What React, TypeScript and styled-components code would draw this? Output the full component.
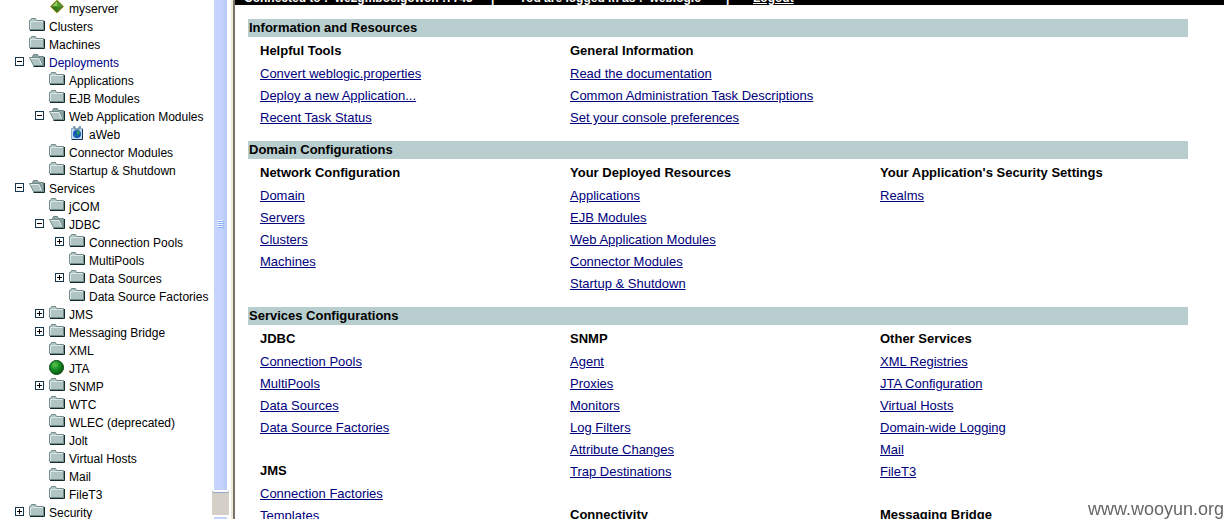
import React from 'react';
import styled, { createGlobalStyle } from 'styled-components';

const GlobalStyle = createGlobalStyle`
  * { box-sizing: border-box; }
  body {
    margin: 0;
    background: #fff;
    color: #000;
    font-family: "Liberation Sans", Arial, sans-serif;
    font-size: 13px;
    overflow: hidden;
  }
`;

const Page = styled.div`
  display: flex;
  height: 100vh;
  overflow: hidden;
`;

const Sidebar = styled.nav`
  flex: 0 0 212px;
  overflow: hidden;
`;

const Tree = styled.ul`
  list-style: none;
  margin: 0;
  padding: 0;
`;

const TreeRow = styled.li<{ $level: number }>`
  display: flex;
  align-items: center;
  height: 18px;
  padding-left: ${(p) => 14 + p.$level * 20}px;
  font-size: 12px;
  line-height: 18px;
  white-space: nowrap;
`;

const Toggle = styled.button`
  display: flex;
  width: 15px;
  height: 18px;
  padding: 3px 0 0 1px;
  border: 0;
  background: none;
  svg { flex: none; }
`;

const ToggleSpace = styled.span`
  width: 15px;
`;

const IconSlot = styled.span`
  display: flex;
  flex: 0 0 20px;
  height: 18px;
`;

const TreeLink = styled.a<{ $active?: boolean }>`
  color: ${(p) => (p.$active ? '#00008b' : '#000')};
  text-decoration: none;
`;

const Scrollbar = styled.div`
  display: flex;
  flex-direction: column;
  flex: 0 0 17px;
  background: #d4d0c8;
`;

const Thumb = styled.div`
  display: flex;
  align-items: center;
  justify-content: center;
  height: 492px;
  padding-bottom: 42px;
  border: solid #fff;
  border-width: 0 2px 2px;
  border-radius: 0 0 3px 3px;
  background: linear-gradient(90deg, #c6d5fd, #c3d3fd 60%, #b4c8f6);
  box-shadow: 0 1px 0 #8fa5d4;
`;

const ScrollArrow = styled.div`
  height: 10px;
  margin-top: auto;
  border: 2px solid #fff;
  border-bottom: 0;
  background: #c3d3fd;
  margin-bottom: -6px;
`;

const Divider = styled.div`
  flex: 0 0 6px;
  border-left: 2px solid #fff;
  border-right: 2px solid #77756b;
  background: #ece9d8;
`;

const Main = styled.main`
  flex: 1;
  min-width: 0;
  overflow: hidden;
`;

const StatusBar = styled.header`
  display: flex;
  align-items: flex-end;
  height: 5px;
  padding-left: 9px;
  overflow: hidden;
  background: #000;
  color: #fff;
  font-size: 12px;
  font-weight: bold;
  line-height: 14px;
  white-space: pre;
`;

const StatusText = styled.span<{ $width: number }>`
  flex: 0 0 ${(p) => p.$width}px;
`;

const Logout = styled.a`
  color: #fff;
`;

const Sections = styled.div`
  padding: 14px 36px 0 13px;
`;

const Section = styled.section`
  padding-bottom: 12px;
`;

const SectionTitle = styled.h2`
  margin: 0;
  padding-left: 1px;
  background: #b8cdcd;
  font-size: 13px;
  line-height: 18px;
`;

const Columns = styled.div`
  display: grid;
  grid-template-columns: 310px 310px 1fr;
  padding: 2px 0 0 12px;
`;

const Group = styled.div`
  & + & { margin-top: 20px; }
`;

const GroupTitle = styled.h3`
  margin: 0;
  font-size: 13px;
  line-height: 24px;
`;

const Links = styled.ul`
  list-style: none;
  margin: 0;
  padding: 0;
`;

const LinkItem = styled.li`
  line-height: 22px;
  white-space: nowrap;
  a { color: #00007c; }
`;

const Watermark = styled.div`
  position: fixed;
  right: 0;
  bottom: 0;
  color: #666;
  font-size: 18px;
  line-height: 20px;
`;

type IconKind = 'folder' | 'open' | 'server' | 'web' | 'ball';

function TreeIcon({ kind }: { kind: IconKind }) {
  if (kind === 'server') {
    return (
      <svg width="16" height="18" viewBox="0 0 16 18">
        <path d="M8-1 15.500 6.500 8 14 .5 6.500Z" fill="#fff0a0" />
        <path d="M8 .5 14 6.500 8 12.500 2 6.500Z" fill="#3d8a22" stroke="#4d4a14" />
        <path d="M8 1 3 6.500H8Z" fill="#8ed056" />
        <path d="M8 1 13 6.500H8Z" fill="#57a436" />
        <path d="M3 6.500 8 12V6.500Z" fill="#2f791c" />
      </svg>
    );
  }
  if (kind === 'ball') {
    return (
      <svg width="16" height="18" viewBox="0 0 16 18">
        <defs>
          <radialGradient id="ball" cx="38%" cy="32%" r="65%">
            <stop offset="0" stopColor="#62c552" />
            <stop offset=".5" stopColor="#189326" />
            <stop offset="1" stopColor="#075c12" />
          </radialGradient>
        </defs>
        <circle cx="7.500" cy="7.500" r="7" fill="url(#ball)" stroke="#0a4a12" />
      </svg>
    );
  }
  if (kind === 'web') {
    return (
      <svg width="16" height="18" viewBox="0 0 16 18">
        <path d="M2.500 2.500H4L6 4H10L12 2.500H13.500V13.500H2.500Z" fill="#c3dcf6" stroke="#8fabc4" />
        <path d="M13.500 3V13.500H3" fill="none" stroke="#16354e" />
        <path d="M4 0H6L7 2H9L10 0H12V2L10 4H6L4 2Z" fill="#7f9db0" />
        <circle cx="8" cy="8" r="4" fill="#1455bd" />
        <path d="M8 4.500 10 4.500 11.500 7 10 8 9 10 7.500 7ZM5 8 7 9 7 11Z" fill="#2c9865" />
      </svg>
    );
  }
  if (kind === 'open') {
    return (
      <svg width="16" height="18" viewBox="0 0 16 18">
        <path d="M3.500 2.500 4.500.5H8.500L9.500 2.500H14.500V11.500H5Z" fill="#8ea6a6" stroke="#6d8686" />
        <path d="M15.500 3V12.500H4.500" fill="none" stroke="#142b2b" />
        <path d="M.5 3.500H10.500L14 11.500H4.500Z" fill="#b0c4c4" stroke="#718b8b" />
        <path d="M1.500 4.500H10L12.500 10.500" fill="none" stroke="#e2ecec" />
      </svg>
    );
  }
  return (
    <svg width="16" height="18" viewBox="0 0 16 18">
      <path d="M.5 11.500V2.500H1.500L2.500.5H6.500L7.500 2.500H14.500V11.500Z" fill="#b0c4c4" stroke="#718b8b" />
      <path d="M1.500 11V3.500H14" fill="none" stroke="#dce8e8" />
      <path d="M15.500 3V12.500H1" fill="none" stroke="#142b2b" />
    </svg>
  );
}

function ToggleBox({ open }: { open: boolean }) {
  return (
    <svg width="10" height="10" viewBox="0 0 10 10">
      <rect x=".5" y=".5" width="8" height="8" fill="#fff" stroke="#17364c" />
      <path d={open ? 'M2 4.500H7' : 'M2 4.500H7M4.500 2V7'} stroke="#000" />
    </svg>
  );
}

interface Node {
  label: string;
  level: number;
  icon?: IconKind;
  toggle?: 'open' | 'closed';
  active?: boolean;
}

const nodes: Node[] = [
  { label: 'myserver', level: 1, icon: 'server' },
  { label: 'Clusters', level: 0 },
  { label: 'Machines', level: 0 },
  { label: 'Deployments', level: 0, icon: 'open', toggle: 'open', active: true },
  { label: 'Applications', level: 1 },
  { label: 'EJB Modules', level: 1 },
  { label: 'Web Application Modules', level: 1, icon: 'open', toggle: 'open' },
  { label: 'aWeb', level: 2, icon: 'web' },
  { label: 'Connector Modules', level: 1 },
  { label: 'Startup & Shutdown', level: 1 },
  { label: 'Services', level: 0, icon: 'open', toggle: 'open' },
  { label: 'jCOM', level: 1 },
  { label: 'JDBC', level: 1, icon: 'open', toggle: 'open' },
  { label: 'Connection Pools', level: 2, toggle: 'closed' },
  { label: 'MultiPools', level: 2 },
  { label: 'Data Sources', level: 2, toggle: 'closed' },
  { label: 'Data Source Factories', level: 2 },
  { label: 'JMS', level: 1, toggle: 'closed' },
  { label: 'Messaging Bridge', level: 1, toggle: 'closed' },
  { label: 'XML', level: 1 },
  { label: 'JTA', level: 1, icon: 'ball' },
  { label: 'SNMP', level: 1, toggle: 'closed' },
  { label: 'WTC', level: 1 },
  { label: 'WLEC (deprecated)', level: 1 },
  { label: 'Jolt', level: 1 },
  { label: 'Virtual Hosts', level: 1 },
  { label: 'Mail', level: 1 },
  { label: 'FileT3', level: 1 },
  { label: 'Security', level: 0, toggle: 'closed' },
];

interface LinkGroup {
  title: string;
  links: string[];
}

const sections: { title: string; columns: LinkGroup[][] }[] = [
  {
    title: 'Information and Resources',
    columns: [
      [{ title: 'Helpful Tools', links: ['Convert weblogic.properties', 'Deploy a new Application...', 'Recent Task Status'] }],
      [{ title: 'General Information', links: ['Read the documentation', 'Common Administration Task Descriptions', 'Set your console preferences'] }],
    ],
  },
  {
    title: 'Domain Configurations',
    columns: [
      [{ title: 'Network Configuration', links: ['Domain', 'Servers', 'Clusters', 'Machines'] }],
      [{ title: 'Your Deployed Resources', links: ['Applications', 'EJB Modules', 'Web Application Modules', 'Connector Modules', 'Startup & Shutdown'] }],
      [{ title: "Your Application's Security Settings", links: ['Realms'] }],
    ],
  },
  {
    title: 'Services Configurations',
    columns: [
      [
        { title: 'JDBC', links: ['Connection Pools', 'MultiPools', 'Data Sources', 'Data Source Factories'] },
        { title: 'JMS', links: ['Connection Factories', 'Templates'] },
      ],
      [
        { title: 'SNMP', links: ['Agent', 'Proxies', 'Monitors', 'Log Filters', 'Attribute Changes', 'Trap Destinations'] },
        { title: 'Connectivity', links: [] },
      ],
      [
        { title: 'Other Services', links: ['XML Registries', 'JTA Configuration', 'Virtual Hosts', 'Domain-wide Logging', 'Mail', 'FileT3'] },
        { title: 'Messaging Bridge', links: [] },
      ],
    ],
  },
];

export default function App() {
  return (
    <>
      <GlobalStyle />
      <Page>
        <Sidebar aria-label="Console tree">
          <Tree>
            {nodes.map((n) => (
              <TreeRow key={n.label} $level={n.level}>
                {n.toggle ? (
                  <Toggle aria-label={n.label} aria-expanded={n.toggle === 'open'}>
                    <ToggleBox open={n.toggle === 'open'} />
                  </Toggle>
                ) : (
                  <ToggleSpace />
                )}
                <IconSlot>
                  <TreeIcon kind={n.icon ?? 'folder'} />
                </IconSlot>
                <TreeLink href="#" $active={n.active}>{n.label}</TreeLink>
              </TreeRow>
            ))}
          </Tree>
        </Sidebar>
        <Scrollbar>
          <Thumb>
            <svg width="7" height="9" viewBox="0 0 7 9">
              <path d="M0 .5H6M0 2.500H6M0 4.500H6M0 6.500H6" stroke="#eef4fe" />
              <path d="M1 1.500H7M1 3.500H7M1 5.500H7M1 7.500H7" stroke="#8cb0f8" />
            </svg>
          </Thumb>
          <ScrollArrow />
        </Scrollbar>
        <Divider />
        <Main>
          <StatusBar>
            <StatusText $width={247}>Connected to :  we2gmboe.gowon :7743</StatusText>
            <StatusText $width={28}>|</StatusText>
            <StatusText $width={207}>You are logged in as :  weblogic</StatusText>
            <StatusText $width={27}>|</StatusText>
            <Logout href="#">Logout</Logout>
          </StatusBar>
          <Sections>
            {sections.map((s) => (
              <Section key={s.title}>
                <SectionTitle>{s.title}</SectionTitle>
                <Columns>
                  {s.columns.map((groups) => (
                    <div key={groups[0].title}>
                      {groups.map((g) => (
                        <Group key={g.title}>
                          <GroupTitle>{g.title}</GroupTitle>
                          <Links>
                            {g.links.map((l) => (
                              <LinkItem key={l}><a href="#">{l}</a></LinkItem>
                            ))}
                          </Links>
                        </Group>
                      ))}
                    </div>
                  ))}
                </Columns>
              </Section>
            ))}
          </Sections>
        </Main>
      </Page>
      <Watermark>www.wooyun.org</Watermark>
    </>
  );
}
